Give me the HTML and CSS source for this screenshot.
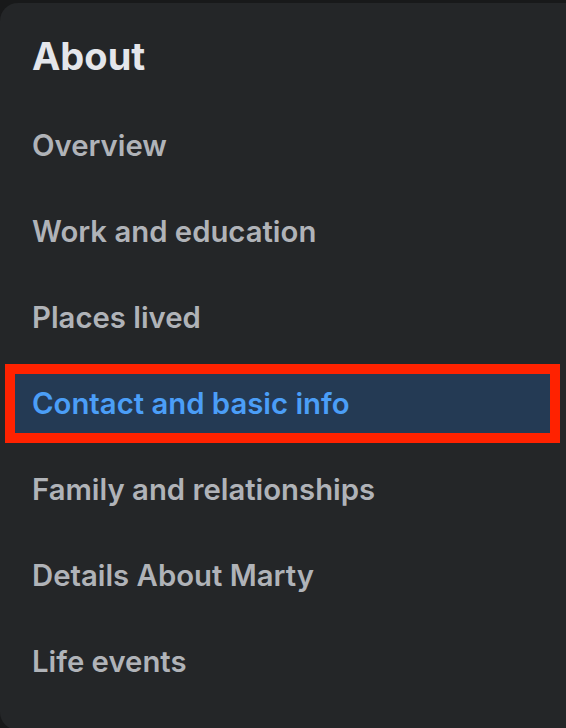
FILE: index.html
```html
<!DOCTYPE html>
<html lang="en">
<head>
    <meta charset="UTF-8">
    <meta name="viewport" content="width=device-width, initial-scale=1.0">
    <title>About</title>
    <link rel="stylesheet" href="styles.css">
</head>
<body>

    <div class="about-card">
        <h1>About</h1>

        <ul class="about-nav">
            <li><a href="#">Overview</a></li>
            <li><a href="#">Work and education</a></li>
            <li><a href="#">Places lived</a></li>
            <li class="active"><a href="#">Contact and basic info</a></li>
            <li><a href="#">Family and relationships</a></li>
            <li><a href="#">Details About Marty</a></li>
            <li><a href="#">Life events</a></li>
        </ul>
    </div>

</body>
</html>
```

FILE: styles.css
```css
body {
    font-family: 'Inter', 'Liberation Sans', sans-serif;
    margin: 0;
    padding: 3px 0 0 0;
    background-color: #18191a;
    overflow: hidden;
}


.about-card {
    background-color: #242628;
    border-radius: 18px 0 0 18px;
    height: 727px;
    padding: 31px 0 0 0;
    box-sizing: border-box;
}


h1 {
    margin: 0 0 38px 32px;
    font-size: 38px;
    line-height: 44px;
    font-weight: 700;
    color: #e4e6eb;
}


.about-nav {
    list-style: none;
    margin: 0;
    padding: 0;
    display: flex;
    flex-direction: column;
    gap: 27px;
}

.about-nav li {
    margin-left: 15px;
    width: 535px;
    height: 59px;
    display: flex;
    align-items: center;
}

.about-nav a {
    padding-left: 17px;
    font-size: 29.3px;
    font-weight: 600;
    color: #b0b3b8;
    text-decoration: none;
}


.about-nav li.active {
    background-color: #243a54;
    outline: 10px solid #ff2200;
}

.about-nav li.active a {
    color: #4b9ef7;
}
```
